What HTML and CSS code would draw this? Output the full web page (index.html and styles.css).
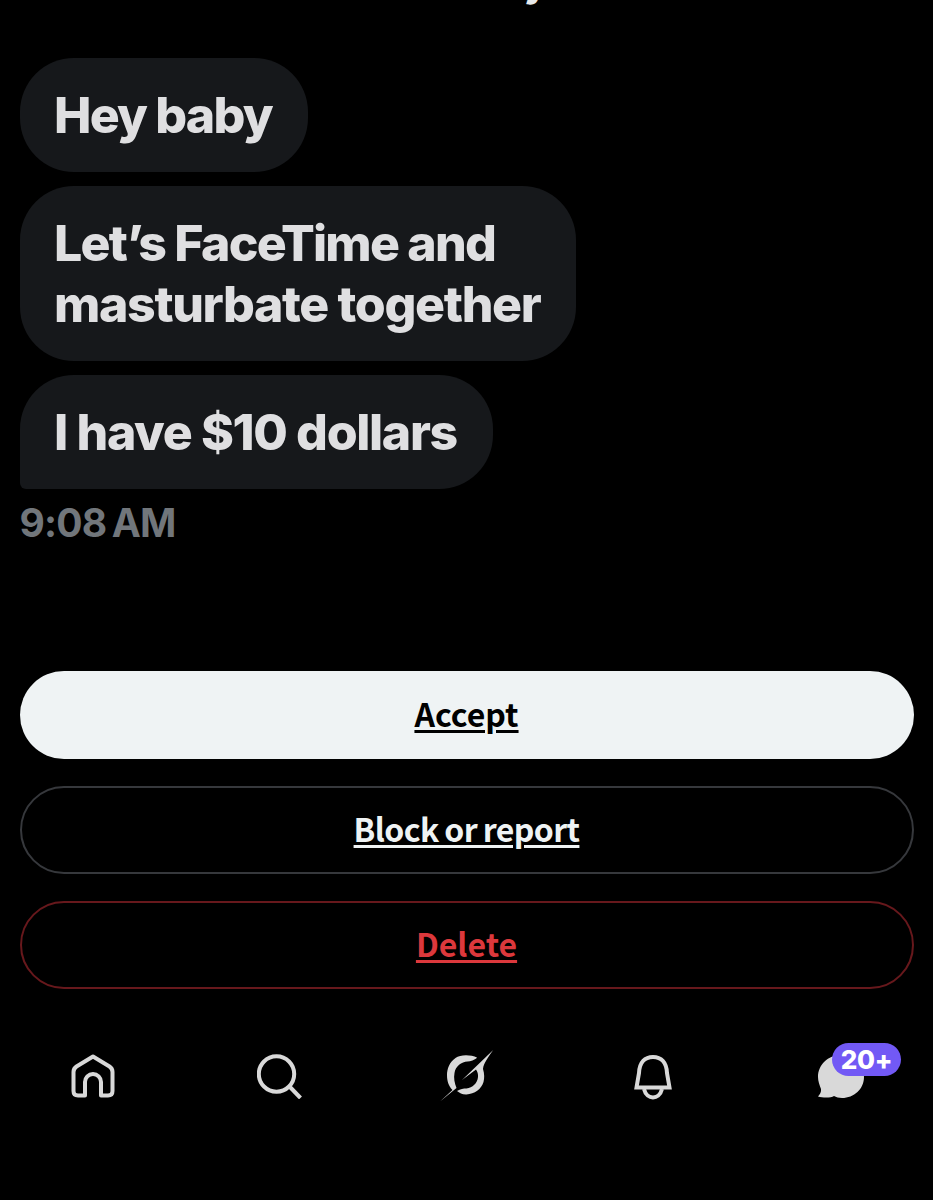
FILE: index.html
```html
<!DOCTYPE html>
<html lang="en">
<head>
  <meta charset="UTF-8">
  <meta name="viewport" content="width=device-width, initial-scale=1.0">
  <title>Message request</title>
  <link rel="stylesheet" href="styles.css">
</head>
<body>
  <div class="screen">
    <div class="header-clip"><span class="header-name">y</span></div>

    <div class="messages">
      <div class="bubble"><span class="tight">Hey baby</span></div>
      <div class="bubble"><span class="tight">Let’s FaceTime and</span><br>masturbate together</div>
      <div class="bubble bubble-last">I have $10 dollars</div>
      <div class="time">9:08 AM</div>
    </div>

    <div class="actions">
      <a class="btn btn-accept" href="#">Accept</a>
      <a class="btn btn-block" href="#">Block or report</a>
      <a class="btn btn-delete" href="#">Delete</a>
    </div>

    <nav class="tabbar">
      <div class="tab">
        <svg class="icon" width="44" height="44" viewBox="0 0 44 44">
          <path class="line" d="M22 2.5 L38.5 12.5 Q41.5 14.5 41.5 18 V37 Q41.5 41.5 37 41.5 H30 V28 A8 8 0 0 0 14 28 V41.5 H7 Q2.5 41.5 2.5 37 V18 Q2.5 14.5 5.5 12.5 Z"/>
        </svg>
      </div>
      <div class="tab">
        <svg class="icon" width="46" height="46" viewBox="1 0 46 46">
          <circle class="line" cx="20.5" cy="21" r="17.7"/>
          <path class="line" d="M33 33 L44.5 45"/>
        </svg>
      </div>
      <div class="tab">
        <svg class="icon" width="70" height="62" viewBox="1.5 0 70 62">
          <path class="solid" d="M46.7 12.7 C40 9.5 30 9.5 25 13 C19 17 16.5 24 16.5 30 C16.5 36 18 41 22 45 L9.5 56.5 L26 43 C24 38 23 33 24 28 C25 21 31 17 37 16.5 C40 16.3 44 15 46.7 12.7 Z"/>
          <path class="solid" d="M62.7 5 C58 12 53 18 52.5 24 C54 29 54 33 53 37 C51 44 44 49 36 49.5 C32 49.7 29 48 26.5 46 C30 44 33 43.5 36 43.5 C42 43 47 38 47.5 32 C47.8 29 47 27 45.5 24.5 L31.5 35 Z"/>
        </svg>
      </div>
      <div class="tab">
        <svg class="icon icon-bell" width="55" height="55" viewBox="0 0 55 55">
          <path class="line" d="M10.5 38.5 L13 24 C13.5 13 19 8 27 8 C35 8 40.5 13 41 24 L43.5 38.5 Z"/>
          <path class="line" d="M18 40 C19.5 46 23.5 48.5 27 48.5 C30.5 48.5 34.5 46 36 40"/>
        </svg>
      </div>
      <div class="tab">
        <svg class="icon" width="48" height="45" viewBox="5 16 48 45">
          <path class="solid" d="M29 17 C42 17 52 27 52 39 C52 51 42 60 30 60 C27 60 24 59 22 58 C19 60 11 60 6 58.5 C8 56 9.5 54 9 51 C7.5 47 6 43 6 39 C6 27 16 17 29 17 Z"/>
        </svg>
        <span class="badge">20+</span>
      </div>
    </nav>
  </div>
</body>
</html>
```

FILE: styles.css
```css
html, body {
  margin: 0;
  padding: 0;
  background-color: #000;
}

.screen {
  width: 933px;
  height: 1200px;
  overflow: hidden;
  font-family: Inter, "Liberation Sans", sans-serif;
}

.header-clip {
  height: 58px;
  overflow: hidden;
  text-align: center;
  padding-left: 138px;
  box-sizing: border-box;
}

.header-name {
  display: block;
  margin-top: -34px;
  font-size: 36px;
  line-height: 36px;
  font-weight: 800;
  color: #e7e9ea;
}

.messages {
  padding: 0 19.5px;
  display: flex;
  flex-direction: column;
  align-items: flex-start;
}

.bubble {
  background-color: #16181b;
  color: #dfdfe1;
  font-size: 50px;
  font-weight: 800;
  line-height: 61px;
  letter-spacing: -1.35px;
  padding: 26.5px 36px 26.5px 34.5px;
  border-radius: 54px;
  margin-bottom: 14px;
}

.tight {
  letter-spacing: -1.8px;
}

.bubble-last {
  border-bottom-left-radius: 6px;
  margin-bottom: 0;
}

.time {
  margin-top: 12px;
  color: #71767b;
  font-size: 39px;
  font-weight: 700;
  line-height: 44px;
  letter-spacing: -0.8px;
  word-spacing: -3px;
}

.actions {
  padding: 0 19.5px;
  margin-top: 126px;
  display: flex;
  flex-direction: column;
  gap: 27px;
}

.btn {
  display: flex;
  align-items: center;
  justify-content: center;
  height: 88px;
  box-sizing: border-box;
  padding-bottom: 4px;
  border-radius: 44px;
  font-family: "Noto Sans CJK JP", "Noto Sans", sans-serif;
  font-size: 32px;
  font-weight: 700;
  text-decoration: underline;
  text-decoration-thickness: 2.5px;
  text-underline-offset: 3px;
}

.btn-accept {
  background-color: #eff3f4;
  color: #000;
}

.btn-block {
  border: 2px solid #36383c;
  color: #eff3f4;
  letter-spacing: -0.6px;
  word-spacing: -1px;
}

.btn-delete {
  border: 2px solid #67181c;
  color: #dc383c;
}

.tabbar {
  margin-top: 37px;
  display: grid;
  grid-template-columns: repeat(5, 187px);
  justify-content: center;
  align-items: center;
  height: 100px;
}

.tab {
  position: relative;
  display: flex;
  justify-content: center;
  align-items: center;
}

.icon {
  display: block;
}

.line {
  fill: none;
  stroke: #d9d9d9;
  stroke-width: 4;
  stroke-linejoin: round;
}

.icon-bell .line {
  stroke-linejoin: miter;
}

.solid {
  fill: #d9d9d9;
}

.badge {
  position: absolute;
  left: 85px;
  top: -11px;
  width: 69px;
  height: 33px;
  border-radius: 17px;
  background-color: #7259f5;
  color: #fff;
  font-size: 26px;
  font-weight: 800;
  line-height: 33px;
  letter-spacing: -0.3px;
  text-align: center;
}
```
